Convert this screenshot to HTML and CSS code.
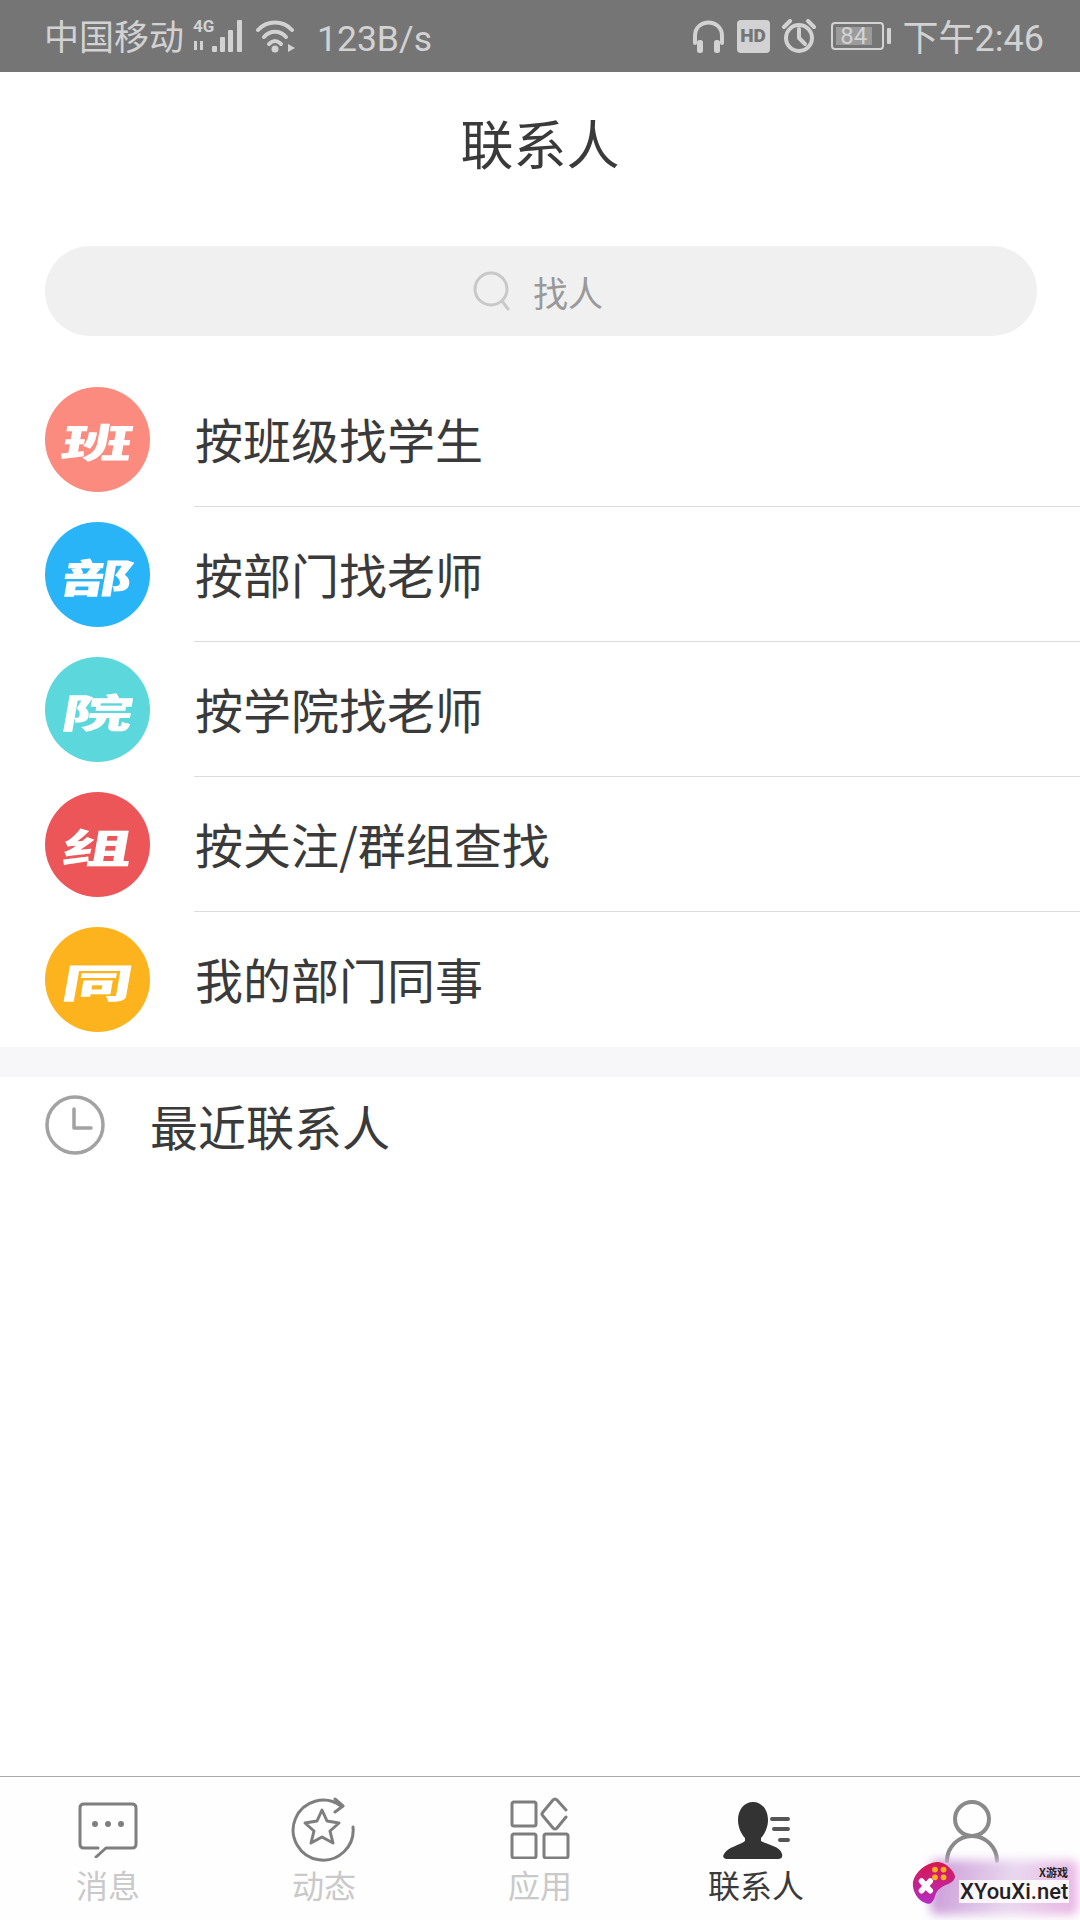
FILE: index.html
```html
<!DOCTYPE html>
<html lang="zh">
<head>
    <meta charset="utf-8">
    <title>联系人</title>
    <link rel="stylesheet" href="styles.css">
</head>
<body>
    <div class="page">
        <div class="status-bar">
            <span class="carrier">中国移动</span>
            <div class="signal-wrap">
                <span class="signal-type">4G</span>
                <svg class="signal" width="53" height="34" viewBox="0 0 53 34">
                    <rect x="1" y="22" width="3" height="9" fill="#9a9a9a"/>
                    <rect x="7" y="22" width="3" height="9" fill="#9a9a9a"/>
                    <rect x="19" y="27" width="5" height="6" rx="1"/>
                    <rect x="27" y="18" width="5" height="15" rx="1"/>
                    <rect x="35" y="11" width="5" height="22" rx="1"/>
                    <rect x="44" y="1" width="5" height="32" rx="1"/>
                </svg>
            </div>
            <svg class="wifi" width="40" height="34" viewBox="0 0 40 34">
                <path d="M2 11 C11 1 27 1 36 11" />
                <path d="M8 18 C14 11 24 11 30 18" />
                <path d="M13 25 C17 21 21 21 25 25" />
                <circle cx="19" cy="30" r="3.5" class="solid"/>
                <path d="M32 25 L39 29 L32 33 Z" class="solid"/>
            </svg>
            <span class="speed">123B/s</span>
            <div class="status-right">
                <svg width="33" height="34" viewBox="0 0 33 34">
                    <path d="M3 24 V17 C3 -1 30 -1 30 17 V24" />
                    <rect x="5" y="21" width="6" height="13" rx="2.5" class="solid"/>
                    <rect x="22" y="21" width="6" height="13" rx="2.5" class="solid"/>
                </svg>
                <span class="hd">HD</span>
                <svg width="34" height="34" viewBox="0 0 34 34">
                    <circle cx="17" cy="19" r="13" />
                    <path d="M17 10 V19 L23 25" />
                    <path d="M2 8 L8 2" />
                    <path d="M26 2 L32 8" />
                </svg>
                <div class="battery">
                    <span class="battery-level">84</span>
                </div>
                <span class="battery-cap"></span>
                <span class="clock">下午2:46</span>
            </div>
        </div>

        <div class="title">联系人</div>

        <div class="search">
            <svg class="search-icon" width="38" height="40" viewBox="0 0 38 40">
                <circle cx="18" cy="18" r="16" />
                <path d="M29 30 L35 38" />
            </svg>
            <span>找人</span>
        </div>

        <ul class="finder-list">
            <li class="finder-row">
                <span class="badge badge-red"><b>班</b></span>
                <div class="finder-label">按班级找学生</div>
            </li>
            <li class="finder-row">
                <span class="badge badge-blue"><b>部</b></span>
                <div class="finder-label">按部门找老师</div>
            </li>
            <li class="finder-row">
                <span class="badge badge-teal"><b>院</b></span>
                <div class="finder-label">按学院找老师</div>
            </li>
            <li class="finder-row">
                <span class="badge badge-crimson"><b>组</b></span>
                <div class="finder-label">按关注/群组查找</div>
            </li>
            <li class="finder-row">
                <span class="badge badge-amber"><b>同</b></span>
                <div class="finder-label last">我的部门同事</div>
            </li>
        </ul>

        <div class="band"></div>

        <div class="recent">
            <svg width="60" height="60" viewBox="0 0 60 60">
                <circle cx="30" cy="30" r="28" />
                <path d="M29 14 V33 H46" />
            </svg>
            <span>最近联系人</span>
        </div>

        <div class="spacer"></div>

        <nav class="tabs">
            <div class="tab">
                <svg class="icon-message" width="60" height="56" viewBox="0 0 60 56">
                    <path d="M20 46 H6 Q2 46 2 42 V6 Q2 2 6 2 H54 Q58 2 58 6 V42 Q58 46 54 46 H28 L18 55" />
                    <circle cx="17" cy="22" r="3" class="solid"/>
                    <circle cx="30" cy="22" r="3" class="solid"/>
                    <circle cx="43" cy="22" r="3" class="solid"/>
                </svg>
                <span>消息</span>
            </div>
            <div class="tab">
                <svg class="icon-feed" width="66" height="66" viewBox="0 0 66 66">
                    <path d="M50 9 A30 30 0 1 0 62 30" />
                    <path d="M44 2 L52 9 L44 15" />
                    <path d="M31 13 L36 24 L48 26 L39 34 L42 46 L31 40 L20 46 L23 34 L14 26 L26 24 Z" />
                </svg>
                <span>动态</span>
            </div>
            <div class="tab">
                <svg class="icon-apps" width="62" height="62" viewBox="0 0 62 62">
                    <rect x="3" y="5" width="24" height="24" rx="2" />
                    <rect x="3" y="37" width="24" height="24" rx="2" />
                    <rect x="35" y="37" width="24" height="24" rx="2" />
                    <path d="M57 20 L48 31 Q46 33 44 31 L34 19 Q32 17 34 15 L44 3 Q46 1 48 3 L57 13" />
                </svg>
                <span>应用</span>
            </div>
            <div class="tab tab-active">
                <svg width="68" height="58" viewBox="0 0 68 58">
                    <path class="solid" d="M31 0 C40 0 46 8 46 18 C46 26 42 33 39 36 L39 39 C45 43 58 44 60 52 C61 56 59 57 56 57 H6 C2 57 0 55 2 52 C6 45 18 43 23 39 L23 36 C20 33 16 26 16 18 C16 8 22 0 31 0 Z"/>
                    <path d="M50 17 H66 M52 27 H66 M58 38 H66" />
                </svg>
                <span>联系人</span>
            </div>
            <div class="tab">
                <svg class="icon-me" width="56" height="64" viewBox="0 0 56 64">
                    <circle cx="28" cy="20" r="17" />
                    <path d="M3 62 A25 25 0 0 1 53 62" />
                </svg>
            </div>
        </nav>

        <!-- site stamp over the bottom right corner -->
        <div class="stamp">
            <div class="stamp-glow"></div>
            <svg class="stamp-pad" width="44" height="46" viewBox="0 0 46 46">
                <defs>
                    <linearGradient id="padFill" x1="0" y1="0" x2="0" y2="1">
                        <stop offset="0" stop-color="#d8174c"/>
                        <stop offset="1" stop-color="#b52cc4"/>
                    </linearGradient>
                </defs>
                <path fill="url(#padFill)" d="M1 22 C3 12 14 2 26 1 C34 0 44 10 45 16 C45 20 42 22 38 24 C30 27 26 30 24 37 C22 44 18 46 14 44 C6 41 0 32 1 22 Z"/>
                <path stroke="#fff" stroke-width="6" stroke-linecap="round" d="M10 21 L19 31 M19 21 L10 31"/>
                <circle cx="24" cy="9" r="3" fill="#fbb11b"/>
                <circle cx="33" cy="9" r="3" fill="#fbb11b"/>
                <circle cx="24" cy="17" r="3" fill="#fbb11b"/>
                <circle cx="33" cy="17" r="3" fill="#fbb11b"/>
            </svg>
            <span class="stamp-cn">X游戏</span>
            <span class="stamp-name">XYouXi.net</span>
        </div>
    </div>
</body>
</html>
```

FILE: styles.css
```css
body {
    margin: 0;
    background-color: #fff;
    font-family: "Noto Sans CJK SC", sans-serif;
    color: #3a3a3a;
}

svg {
    display: block;
    fill: none;
    stroke-linecap: round;
    stroke-linejoin: round;
}

.page {
    position: relative;
    display: flex;
    flex-direction: column;
    width: 1080px;
    height: 1920px;
    overflow: hidden;
    background-color: #fff;
}

/* status bar */
.status-bar {
    display: flex;
    align-items: center;
    flex: none;
    height: 72px;
    padding: 0 36px 0 44px;
    background-color: #757575;
    color: #d2d2d2;
    font-family: Roboto, "Noto Sans CJK SC", sans-serif;
    font-size: 35px;
    line-height: 48px;
    white-space: nowrap;
}

.carrier,
.speed,
.clock {
    padding-top: 5px;
}

.status-bar svg {
    stroke: #d2d2d2;
    stroke-width: 4;
}

.status-bar svg .solid {
    fill: #d2d2d2;
    stroke: none;
}

.signal-wrap {
    position: relative;
    margin-left: 9px;
}

.signal rect {
    fill: #d2d2d2;
    stroke: none;
}

.signal-type {
    position: absolute;
    top: -1px;
    left: 0;
    font-size: 17px;
    font-weight: 700;
    line-height: 17px;
}

.wifi {
    margin-left: 10px;
}

.speed {
    margin-left: 21px;
    font-size: 35.5px;
}

.status-right {
    display: flex;
    align-items: center;
    margin-left: auto;
}

.hd {
    display: flex;
    justify-content: center;
    align-items: center;
    width: 33px;
    height: 33px;
    margin: 0 12px;
    border-radius: 4px;
    background-color: #d2d2d2;
    color: #757575;
    font-size: 19px;
    font-weight: 900;
}

.battery {
    display: flex;
    box-sizing: border-box;
    width: 53px;
    height: 28px;
    margin-left: 15px;
    padding: 3px;
    border: 2px solid #d2d2d2;
    border-radius: 4px;
}

.battery-level {
    display: flex;
    justify-content: center;
    align-items: center;
    width: 84%;
    background-color: #9b9b9b;
    font-size: 24px;
    line-height: 1;
}

.battery-cap {
    width: 4px;
    height: 16px;
    margin-left: 3px;
    border-radius: 1px;
    background-color: #d2d2d2;
}

.clock {
    margin-left: 12px;
    font-size: 36px;
}

/* header and search */
.title {
    flex: none;
    height: 140px;
    font-size: 53px;
    line-height: 140px;
    text-align: center;
}

.search {
    display: flex;
    justify-content: center;
    align-items: center;
    flex: none;
    gap: 22px;
    box-sizing: border-box;
    width: 992px;
    height: 90px;
    margin: 34px 0 0 45px;
    padding-right: 6px;
    border-radius: 45px;
    background-color: #f0f0f0;
    color: #999;
    font-size: 35px;
}

.search-icon {
    stroke: #c8c8c8;
    stroke-width: 3;
}

/* finder rows */
.finder-list {
    flex: none;
    margin: 36px 0 0;
    padding: 0;
    list-style: none;
}

.finder-row {
    display: flex;
    align-items: center;
}

.badge {
    display: flex;
    justify-content: center;
    align-items: center;
    flex: none;
    width: 105px;
    height: 105px;
    margin: 0 44px 0 45px;
    border-radius: 50%;
    color: #fff;
}

.badge b {
    font-size: 50px;
    font-weight: 900;
    line-height: 1;
    transform: skewX(-10deg) scale(1.42, 0.8);
}

.badge-red { background-color: #fb8b7f; }
.badge-blue { background-color: #28b4f7; }
.badge-teal { background-color: #5cd7dc; }
.badge-crimson { background-color: #ec5658; }
.badge-amber { background-color: #fdb31d; }

.finder-label {
    flex: 1;
    box-sizing: border-box;
    height: 135px;
    padding-left: 1px;
    border-bottom: 1px solid #dcdcdc;
    font-size: 48px;
    line-height: 132px;
}

.finder-label.last {
    border-bottom: none;
}

.band {
    flex: none;
    height: 30px;
    background-color: #f7f7f9;
}

.recent {
    display: flex;
    align-items: center;
    flex: none;
    height: 96px;
    padding-left: 45px;
    font-size: 48px;
    line-height: 92px;
}

.recent svg {
    stroke: #a2a2a2;
    stroke-width: 3.5;
}

.recent span {
    margin-left: 45px;
}

.spacer {
    flex: 1;
}

/* bottom tabs */
.tabs {
    display: flex;
    flex: none;
    height: 143px;
    border-top: 1px solid #aaa;
    background-color: #fefefe;
}

.tab {
    position: relative;
    display: flex;
    flex: 1;
    flex-direction: column;
    align-items: center;
    color: #c9c9c9;
    font-size: 32px;
    line-height: 40px;
}

.tab svg {
    position: absolute;
    top: 20px;
    stroke: #7e7e7e;
    stroke-width: 3;
}

.tab .icon-message {
    top: 25px;
}

.tab .icon-me {
    top: 22px;
    stroke: #8a8a8a;
    stroke-width: 4;
}

.tab svg .solid {
    fill: #7e7e7e;
    stroke: none;
}

.tab span {
    margin-top: 87px;
}

.tab-active {
    color: #3a3a3a;
}

.tab-active svg {
    top: 25px;
    stroke: #555;
    stroke-width: 4;
}

.tab-active svg .solid {
    fill: #333;
}

.stamp {
    position: absolute;
    right: 2px;
    bottom: 5px;
    width: 168px;
    height: 55px;
}

.stamp-glow {
    position: absolute;
    top: 0;
    left: 20px;
    right: 0;
    bottom: 0;
    border-radius: 8px;
    background: linear-gradient(100deg, #c99ad8, #e9d8ef 55%, #e9b4e3);
    filter: blur(5px);
}

.stamp-pad {
    position: absolute;
    left: 2px;
    top: 0;
}

.stamp-name {
    position: absolute;
    left: 49px;
    top: 20px;
    padding: 0 1px;
    background-color: rgba(255, 255, 255, 0.85);
    color: #222;
    font-family: Roboto, sans-serif;
    font-size: 22px;
    font-weight: 500;
    line-height: 23px;
}

.stamp-cn {
    position: absolute;
    right: 10px;
    top: 5px;
    color: #222;
    font-size: 11px;
    font-weight: 700;
    line-height: 14px;
}
```
